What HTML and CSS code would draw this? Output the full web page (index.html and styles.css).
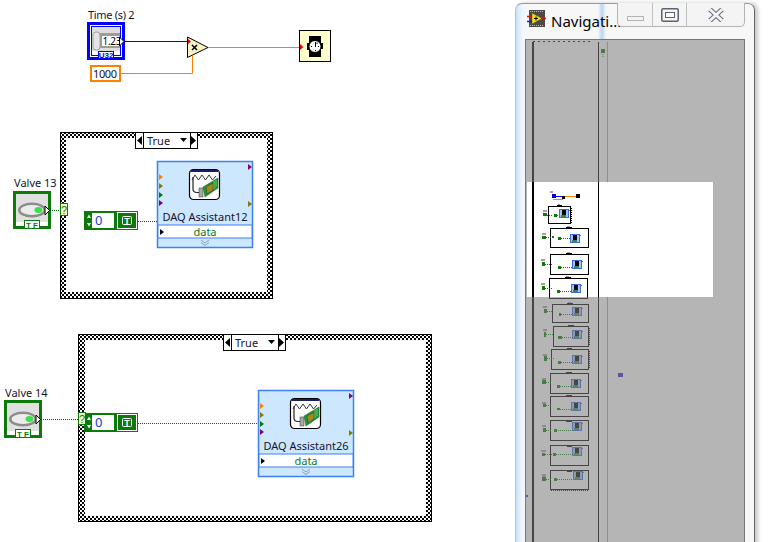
FILE: index.html
```html
<!DOCTYPE html>
<html lang="en">
<head>
<meta charset="utf-8">
<title>LabVIEW block diagram</title>
<link rel="stylesheet" href="styles.css">
</head>
<body>
<main class="desktop">
  <svg class="diagram" width="510" height="542" viewBox="0 0 510 542" xmlns="http://www.w3.org/2000/svg">
    <defs>
      <pattern id="checker" width="4" height="4" patternUnits="userSpaceOnUse">
        <rect width="4" height="4" fill="#fff"/>
        <rect width="2" height="2" fill="#000"/>
        <rect x="2" y="2" width="2" height="2" fill="#000"/>
      </pattern>

      <g id="selector">
        <rect class="sel-box" x="0.5" y="0.5" width="62" height="16"/>
        <path class="ink-line" d="M8.5 0V17M55.5 0V17"/>
        <path class="ink" d="M2 8.5L7 4V13Z"/>
        <path class="ink" d="M61 8.5L56 4V13Z"/>
        <path class="ink" d="M45 6H52L48.500 10Z"/>
      </g>

      <g id="daq">
        <rect class="daq-box" x="0.5" y="0.5" width="95" height="86"/>
        <rect class="daq-row" x="1" y="64" width="94" height="13"/>
        <path class="term-orange" d="M2 13V19L6 16Z"/>
        <path class="term-olive" d="M2 22V28L6 25Z"/>
        <path class="term-green" d="M2 31V37L6 34Z"/>
        <path class="term-purple" d="M2 39V45L6 42Z"/>
        <path class="term-purple" d="M91 3V9L95 6Z"/>
        <path class="term-olive" d="M91 40V46L95 43Z"/>
        <path class="ink" d="M3 68V74L7 71Z"/>
        <path class="chevron" d="M44 79L48 82L52 79M44 81.500L48 84.500L52 81.500"/>
        <g transform="translate(32 8)">
          <rect class="icon-card" x="0.500" y="0.500" width="30" height="30" rx="4"/>
          <rect class="icon-band" x="2" y="1" width="27" height="2"/>
          <path class="icon-wave" d="M3 11L6 6L9.500 11L13 6L16.500 11L20 6L23.500 11L27 7"/>
          <path class="icon-cable" d="M4 8V20Q4 23.500 8 23.500H11"/>
          <path class="board" d="M14 18L29 9V19L16 28Z"/>
          <path class="board-chip" d="M17 18L24 14V21L18 25Z"/>
          <rect class="plug" x="10" y="19" width="4" height="9"/>
          <path class="icon-trace" d="M25 12V20M27 11V18"/>
        </g>
      </g>

      <g id="led-control">
        <rect class="led-frame" x="1.500" y="1.500" width="35" height="35"/>
        <rect class="led-panel" x="3" y="3" width="32" height="28"/>
        <ellipse class="led-ring" cx="19" cy="19" rx="14" ry="7.500"/>
        <ellipse class="led-core" cx="19" cy="19" rx="11.500" ry="5"/>
        <ellipse class="led-spot" cx="25.500" cy="19" rx="4" ry="3"/>
        <path class="out-arrow" d="M32 15V24L36.500 19.500Z"/>
        <rect class="tf-tag" x="11.500" y="29.500" width="15" height="8"/>
        <text class="tf-text" x="19" y="36.500">T F</text>
      </g>

      <g id="bool-const">
        <rect class="num-box" x="1" y="1" width="30" height="17"/>
        <rect class="spin" x="2" y="2" width="6" height="15"/>
        <path class="spin-arrow" d="M5 3.500L7 7H3ZM5 15.500L7 12H3Z"/>
        <text class="num-text" x="11" y="14">0</text>
        <rect class="t-outer" x="32.500" y="0.500" width="21" height="18"/>
        <rect class="t-inner" x="34" y="2" width="18" height="15"/>
        <rect class="t-chip" x="38.500" y="5.500" width="9" height="8" rx="1"/>
        <text class="t-text" x="43" y="13">T</text>
      </g>
    </defs>

    <!-- top row -->
    <path class="wire-blue" d="M124 41.500H188"/>
    <path class="wire-orange" d="M120 73.500H192.500V56M208 47.500H300"/>
    <text class="label label-tight" x="88" y="19">Time (s) 2</text>
    <rect class="u32-outer" x="88.500" y="23.500" width="35" height="35"/>
    <rect class="u32-inner" x="91.500" y="26.500" width="29" height="29"/>
    <rect class="u32-panel" x="92" y="27" width="28" height="24"/>
    <rect class="u32-slide" x="99" y="33" width="21" height="15"/>
    <rect class="u32-knob" x="93" y="32" width="7" height="18" rx="3"/>
    <rect class="u32-field" x="102" y="36" width="17" height="10"/>
    <text class="u32-value" x="102.500" y="45">1.23</text>
    <path class="out-arrow" d="M119.500 37V46L124 41.500Z"/>
    <rect class="u32-tag" x="98.500" y="51.500" width="15" height="7"/>
    <text class="u32-text" x="106" y="58">U32</text>
    <rect class="const-box" x="91" y="66" width="29" height="15"/>
    <text class="const-text" x="93" y="78">1000</text>
    <path class="mult" d="M187.500 37V57.500L208 47.500Z"/>
    <path class="term-red" d="M188 39V44L191 41.500Z"/>
    <path class="mult-x" d="M192 45L197 50M197 45L192 50"/>
    <rect class="timer" x="299.500" y="30.500" width="31" height="31"/>
    <path class="term-red" d="M300 44V50L303.500 47Z"/>
    <rect class="ink" x="309" y="36" width="12" height="21"/>
    <circle class="dial" cx="315" cy="46.500" r="6"/>
    <rect class="ink" x="307" y="43" width="2" height="7"/>
    <rect class="ink" x="321" y="43" width="2" height="6"/>
    <path class="ink-line" d="M315.500 42V47M311 46.500H312M318 46.500H319M315.500 50V51M317 42.500V44"/>

    <!-- first case -->
    <rect class="case-frame" x="60.500" y="132.500" width="212" height="166"/>
    <rect class="case-inner" x="66" y="138" width="201" height="154"/>
    <use href="#selector" x="135" y="132"/>
    <text class="label" x="147" y="145">True</text>
    <text class="label" x="14" y="187">Valve 13</text>
    <use href="#led-control" x="13" y="191"/>
    <path class="wire-dots" d="M50 210.500H60M138 221.500H157"/>
    <rect class="tunnel" x="60.500" y="203.500" width="7" height="12"/>
    <text class="tunnel-text" x="64" y="214">?</text>
    <use href="#bool-const" x="84" y="211"/>
    <use href="#daq" x="157" y="161"/>
    <text class="daq-title" x="205" y="221">DAQ Assistant12</text>
    <text class="daq-data" x="205" y="236">data</text>

    <!-- second case -->
    <rect class="case-frame" x="78.500" y="334.500" width="353" height="187"/>
    <rect class="case-inner" x="85" y="340" width="341" height="176"/>
    <use href="#selector" x="223" y="334"/>
    <text class="label" x="235" y="347">True</text>
    <text class="label" x="5" y="397">Valve 14</text>
    <use href="#led-control" x="4" y="400"/>
    <path class="wire-dots" d="M41 419.500H78M138 423.500H258"/>
    <use href="#bool-const" x="84" y="413"/>
    <rect class="tunnel" x="78.500" y="412.500" width="7" height="12"/>
    <text class="tunnel-text" x="82" y="423">?</text>
    <use href="#daq" x="258" y="390"/>
    <text class="daq-title" x="306" y="450">DAQ Assistant26</text>
    <text class="daq-data" x="306" y="465">data</text>
  </svg>

  <section class="nav-window">
    <div class="glass-streak"></div>
    <header class="nav-title">
      <svg class="nav-icon" width="19" height="18" viewBox="0 0 19 18" xmlns="http://www.w3.org/2000/svg">
        <rect class="film" x="2" y="0" width="16" height="17"/>
        <path class="film-holes" d="M3 1.500H17M3 15.500H17"/>
        <path class="lv-tri" d="M5 3V14L15 8.500Z"/>
        <path class="lv-red" d="M14 8.500H19M0 6.500H5"/>
        <path class="lv-blue" d="M0 11.500H5"/>
        <path class="ink-line" d="M7 8.500H11M9 6.500V10.500"/>
      </svg>
      <span class="nav-name">Navigati...</span>
    </header>
    <div class="caption-buttons">
      <div class="cap cap-min">
        <svg width="17" height="5" viewBox="0 0 17 5" xmlns="http://www.w3.org/2000/svg"><rect class="min-glyph" x="0.500" y="0.500" width="16" height="4"/></svg>
      </div>
      <div class="cap cap-max">
        <svg width="18" height="14" viewBox="0 0 18 14" xmlns="http://www.w3.org/2000/svg"><rect class="max-glyph" x="0.750" y="0.750" width="16.500" height="12.500" rx="1.500"/><rect class="max-hole" x="4.500" y="4.500" width="9" height="5"/></svg>
      </div>
      <div class="cap cap-close">
        <svg width="16" height="14" viewBox="0 0 16 14" xmlns="http://www.w3.org/2000/svg"><path class="close-outer" d="M2 1.500L14 12.500M14 1.500L2 12.500"/><path class="close-inner" d="M2 1.500L14 12.500M14 1.500L2 12.500"/></svg>
      </div>
    </div>
    <svg class="nav-map" width="220" height="503" viewBox="525 39 220 503" xmlns="http://www.w3.org/2000/svg">
      <defs>
        <g id="mini-daq">
          <rect class="mini-blue" x="0" y="0" width="10" height="9"/>
          <rect class="mini-light" x="1" y="1" width="8" height="7"/>
          <rect class="mini-dark" x="3" y="1" width="4" height="5"/>
          <rect class="mini-green" x="2" y="6" width="5" height="2"/>
          <rect class="mini-purple" x="10" y="1" width="1" height="1"/>
        </g>
      </defs>
      <rect class="map-bg" x="525" y="39" width="220" height="503"/>
      <path class="map-rule" d="M533 42V542"/>
      <path class="map-rule-fine" d="M598.500 42V542"/>
      <path class="map-dash" d="M533 41.500H590"/>
      <rect class="mini-green-node" x="601" y="49" width="4" height="4"/>
      <path class="mini-wire" d="M603 54V58"/>

      <!-- miniature of the top row -->
      <rect class="mini-speck" x="550" y="191" width="3" height="2"/>
      <rect class="mini-u32" x="552" y="194" width="4" height="4"/>
      <path class="mini-blue-wire" d="M556 196.500H564"/>
      <path class="mini-orange-wire" d="M564 196.500H576M553 199.500H563"/>
      <rect class="mini-dark" x="562" y="196" width="3" height="3"/>
      <rect class="mini-dark" x="576" y="194" width="4" height="4"/>

      <!-- miniature cases -->
      <g>
        <rect class="mini-case" x="548.500" y="206.500" width="22" height="17"/>
        <path class="mini-dash" d="M571.500 208V223"/>
        <rect class="mini-dark" x="557" y="205" width="5" height="2"/><rect class="mini-speck" x="558" y="204" width="2" height="1"/>
        <use href="#mini-daq" x="559" y="209"/>
        <rect class="mini-speck" x="543" y="210" width="4" height="2"/><rect class="mini-green-node" x="543" y="213" width="4" height="3"/>
        <path class="mini-wire" d="M547 215.500H552M557 215.500H559"/><rect class="mini-green-node" x="554" y="214" width="3" height="3"/>
      </g>
      <g>
        <rect class="mini-case" x="550.500" y="228.500" width="38" height="19"/>
        <rect class="mini-dark" x="566" y="227" width="6" height="2"/><rect class="mini-speck" x="567" y="226" width="3" height="1"/>
        <use href="#mini-daq" x="570" y="234"/>
        <rect class="mini-speck" x="542" y="233" width="4" height="2"/><rect class="mini-green-node" x="542" y="236" width="4" height="3"/>
        <path class="mini-wire" d="M546 237.500H552M561 238.500H570"/><rect class="mini-green-node" x="552" y="236" width="2" height="2"/><rect class="mini-green-node" x="558" y="237" width="3" height="3"/>
      </g>
      <g>
        <rect class="mini-case" x="550.500" y="254.500" width="38" height="20"/>
        <rect class="mini-dark" x="566" y="253" width="6" height="2"/><rect class="mini-speck" x="567" y="252" width="3" height="1"/>
        <use href="#mini-daq" x="572" y="260"/>
        <rect class="mini-speck" x="541" y="259" width="4" height="2"/><rect class="mini-green-node" x="542" y="262" width="3" height="4"/>
        <path class="mini-wire" d="M545 264.500H552M561 267.500H572"/><rect class="mini-green-node" x="558" y="266" width="3" height="3"/>
      </g>
      <g>
        <rect class="mini-case" x="549.500" y="278.500" width="38" height="20"/>
        <rect class="mini-dark" x="565" y="277" width="6" height="2"/><rect class="mini-speck" x="566" y="276" width="3" height="1"/>
        <use href="#mini-daq" x="571" y="284"/>
        <rect class="mini-speck" x="541" y="283" width="4" height="2"/><rect class="mini-green-node" x="542" y="286" width="3" height="4"/>
        <path class="mini-wire" d="M545 288.500H552M560 291.500H571"/><rect class="mini-green-node" x="557" y="290" width="3" height="3"/>
      </g>
      <g>
        <rect class="mini-case" x="552.500" y="304.500" width="36" height="18"/>
        <rect class="mini-dark" x="567" y="303" width="6" height="2"/><rect class="mini-speck" x="568" y="302" width="3" height="1"/>
        <use href="#mini-daq" x="572" y="307"/>
        <rect class="mini-speck" x="543" y="306" width="4" height="2"/><rect class="mini-green-node" x="544" y="309" width="3" height="4"/>
        <path class="mini-wire" d="M547 311.500H553M561 314.500H572"/><rect class="mini-green-node" x="559" y="313" width="2" height="3"/>
      </g>
      <g>
        <rect class="mini-case" x="553.500" y="326.500" width="35" height="20"/>
        <path class="mini-dash" d="M589.500 328V345"/>
        <rect class="mini-dark" x="568" y="325" width="6" height="2"/>
        <use href="#mini-daq" x="572" y="330"/>
        <rect class="mini-speck" x="543" y="329" width="4" height="2"/><rect class="mini-green-node" x="544" y="332" width="2" height="5"/>
        <path class="mini-wire" d="M546 334.500H553M562 337.500H572"/><rect class="mini-green-node" x="558" y="336" width="4" height="3"/>
      </g>
      <g>
        <rect class="mini-case" x="551.500" y="349.500" width="37" height="20"/>
        <path class="mini-dash" d="M589.500 351V368"/>
        <rect class="mini-dark" x="567" y="348" width="5" height="2"/>
        <use href="#mini-daq" x="572" y="355"/>
        <rect class="mini-speck" x="543" y="354" width="4" height="2"/><rect class="mini-green-node" x="544" y="356" width="3" height="5"/>
        <path class="mini-wire" d="M547 358.500H554M561 362.500H572"/><rect class="mini-green-node" x="558" y="361" width="3" height="3"/>
      </g>
      <g>
        <rect class="mini-case" x="550.500" y="373.500" width="38" height="20"/>
        <rect class="mini-dark" x="566" y="372" width="6" height="2"/>
        <use href="#mini-daq" x="571" y="379"/>
        <rect class="mini-speck" x="542" y="378" width="4" height="2"/><rect class="mini-green-node" x="542" y="380" width="4" height="4"/>
        <path class="mini-wire" d="M546 382.500H552M560 386.500H571"/><rect class="mini-green-node" x="557" y="385" width="3" height="3"/>
      </g>
      <g>
        <rect class="mini-case" x="550.500" y="396.500" width="38" height="20"/>
        <rect class="mini-dark" x="566" y="395" width="6" height="2"/>
        <use href="#mini-daq" x="571" y="402"/>
        <rect class="mini-speck" x="542" y="402" width="4" height="2"/><rect class="mini-green-node" x="543" y="404" width="3" height="3"/>
        <path class="mini-wire" d="M546 405.500H552M560 409.500H571"/><rect class="mini-green-node" x="557" y="408" width="3" height="2"/>
      </g>
      <g>
        <rect class="mini-case" x="550.500" y="420.500" width="38" height="20"/>
        <rect class="mini-dark" x="566" y="420" width="6" height="2"/>
        <use href="#mini-daq" x="572" y="422"/>
        <rect class="mini-speck" x="542" y="425" width="4" height="2"/><rect class="mini-green-node" x="543" y="428" width="3" height="4"/>
        <path class="mini-wire" d="M546 430.500H552M556 430.500H572"/><rect class="mini-green-node" x="554" y="429" width="3" height="3"/>
      </g>
      <g>
        <rect class="mini-case" x="550.500" y="445.500" width="38" height="20"/>
        <rect class="mini-dark" x="567" y="445" width="5" height="2"/>
        <use href="#mini-daq" x="572" y="447"/>
        <rect class="mini-speck" x="541" y="450" width="5" height="2"/><rect class="mini-green-node" x="542" y="453" width="3" height="3"/>
        <path class="mini-wire" d="M545 454.500H552M556 454.500H572"/><rect class="mini-green-node" x="553" y="453" width="3" height="3"/>
      </g>
      <g>
        <rect class="mini-case" x="550.500" y="470.500" width="38" height="19"/>
        <path class="mini-dash" d="M551 490.500H588"/>
        <rect class="mini-dark" x="567" y="470" width="5" height="2"/>
        <use href="#mini-daq" x="573" y="471"/>
        <rect class="mini-speck" x="542" y="474" width="4" height="3"/><rect class="mini-green-node" x="542" y="477" width="4" height="4"/>
        <path class="mini-wire" d="M546 479.500H552M557 479.500H573"/><rect class="mini-green-node" x="554" y="478" width="3" height="3"/>
      </g>
      <rect class="mini-indigo" x="618" y="373" width="5" height="4"/>
      <rect class="mini-indigo" x="526" y="495" width="2" height="2"/>

      <!-- dimmed area outside the visible region -->
      <path class="map-shade" d="M525 39H745V542H525ZM527 182V297H713V182Z"/>
      <path class="map-rule-thin" d="M607.500 42V182M607.500 297V542"/>
      <rect class="map-edge" x="525.500" y="39.500" width="219" height="503"/>
    </svg>
  </section>
</main>
</body>
</html>
```

FILE: styles.css
```css
html, body {
  margin: 0;
  padding: 0;
  background: #fff;
}

.desktop {
  position: relative;
  width: 773px;
  height: 542px;
  overflow: hidden;
  background: #fff;
}

.diagram {
  position: absolute;
  left: 0;
  top: 0;
  display: block;
}

/* diagram text */
.label, .daq-title, .daq-data, .const-text, .num-text, .u32-value {
  font-family: "Noto Sans", "Liberation Sans", sans-serif;
  font-size: 11px;
}
.label { fill: #14142e; }
.label-tight { letter-spacing: -0.3px; }
.daq-title { fill: #14142e; text-anchor: middle; }
.daq-data { fill: #0a7a1e; text-anchor: middle; }
.const-text { fill: #101030; letter-spacing: -0.4px; }
.num-text { fill: #1a3ad8; font-size: 13px; }
.u32-value { fill: #000; font-size: 10px; letter-spacing: -0.3px; }
.u32-text, .tf-text {
  font-family: "Liberation Sans", sans-serif;
  font-size: 8px;
  font-weight: 700;
  text-anchor: middle;
}
.u32-text { fill: #0000ff; }
.tf-text { fill: #0b7a0b; }
.tunnel-text {
  font-family: "Liberation Sans", sans-serif;
  font-size: 11px;
  fill: #0b7a0b;
  text-anchor: middle;
}
.t-text {
  font-family: "Liberation Sans", sans-serif;
  font-size: 9px;
  font-weight: 700;
  fill: #fff;
  text-anchor: middle;
}

/* wires */
.wire-blue, .wire-orange, .wire-dots {
  fill: none;
  stroke-width: 1;
}
.wire-blue { stroke: #0000ff; }
.wire-orange { stroke: #ff8000; }
.wire-dots { stroke: #006a00; stroke-dasharray: 1 1; }

/* shared ink */
.ink { fill: #000; }
.ink-line { fill: none; stroke: #000; stroke-width: 1; }
.out-arrow { fill: #fff; stroke: #000; stroke-width: 1; }

/* U32 control */
.u32-outer { fill: #fff; stroke: #0000ff; stroke-width: 3; }
.u32-inner { fill: #fff; stroke: #0000ff; stroke-width: 1; }
.u32-panel { fill: #dedede; }
.u32-slide { fill: #9c9c9c; }
.u32-knob { fill: #e4e4e4; stroke: #a0a0a0; stroke-width: 1; }
.u32-field { fill: #fff; }
.u32-tag { fill: #fff; stroke: #0000ff; stroke-width: 1; }
.const-box { fill: #fff; stroke: #ff8000; stroke-width: 2; }

/* multiply and timer */
.mult { fill: #f8f2c4; stroke: #000; stroke-width: 1; }
.mult-x { fill: none; stroke: #000; stroke-width: 1.500; }
.term-red { fill: #f00000; }
.timer { fill: #ffffcc; stroke: #000; stroke-width: 1; }
.dial { fill: #fff; stroke: #000; stroke-width: 1; }

/* case structures */
.case-frame { fill: url(#checker); stroke: #000; stroke-width: 1; }
.case-inner { fill: #fff; }
.sel-box { fill: #fff; stroke: #000; stroke-width: 1; }

/* DAQ assistant */
.daq-box { fill: #cde7ff; stroke: #3f7ff2; stroke-width: 1.500; }
.daq-row { fill: #fff; stroke: #3f7ff2; stroke-width: 1; }
.term-orange { fill: #ff8000; }
.term-olive { fill: #7d7d00; }
.term-green { fill: #007a00; }
.term-purple { fill: #800080; }
.chevron { fill: none; stroke: #8aa0b8; stroke-width: 1; }
.icon-card { fill: #fff; stroke: #000; stroke-width: 1.200; }
.icon-band { fill: #1c1c60; }
.icon-wave { fill: none; stroke: #333; stroke-width: 1; }
.icon-cable { fill: none; stroke: #222; stroke-width: 1.200; }
.board { fill: #1c9a3c; stroke: #0d5a22; stroke-width: 0.500; }
.board-chip { fill: #a08a20; stroke: #3a3000; stroke-width: 0.500; }
.plug { fill: #a8a8a8; stroke: #333; stroke-width: 0.500; }
.icon-trace { fill: none; stroke: #d0e860; stroke-width: 0.500; }

/* boolean controls and constants */
.led-frame { fill: #fff; stroke: #0b7a0b; stroke-width: 3; }
.led-panel { fill: #e0e0e0; }
.led-ring { fill: #8c8c8c; }
.led-core { fill: #ececec; }
.led-spot { fill: #3ce04a; }
.tf-tag { fill: #fff; stroke: #0b7a0b; stroke-width: 1; }
.tunnel { fill: #f6f6c0; stroke: #0b7a0b; stroke-width: 1; }
.num-box { fill: #fff; stroke: #0b7a0b; stroke-width: 2; }
.spin { fill: #0b7a0b; }
.spin-arrow { fill: #fff; }
.t-outer { fill: #fff; stroke: #0b7a0b; stroke-width: 1; }
.t-inner { fill: #0b7a0b; }
.t-chip { fill: #0b7a0b; stroke: #fff; stroke-width: 1; }

/* navigation window */
.nav-window {
  position: absolute;
  left: 515px;
  top: 3px;
  width: 240px;
  height: 560px;
  padding: 0 9px;
  box-sizing: border-box;
  display: flex;
  flex-direction: column;
  background: linear-gradient(90deg, #c9e0f7 0, #eef6ff 6px, #f7f7f7 10px);
  border-radius: 7px 7px 0 0;
  border-right: 1px solid #666;
  border-left: 1px solid #b8c4d0;
  border-top: 1px solid #9a9a9a;
  box-shadow: 3px 0 4px rgba(0, 0, 0, 0.22);
}

.glass-streak {
  position: absolute;
  left: 82px;
  top: 0;
  width: 8px;
  height: 35px;
  background: linear-gradient(90deg, rgba(170, 205, 240, 0), rgba(170, 205, 240, 0.8), rgba(170, 205, 240, 0));
}

.nav-title {
  position: relative;
  height: 35px;
  flex: none;
  display: flex;
  align-items: center;
  gap: 5px;
  padding: 0 0 5px 2px;
  box-sizing: border-box;
}

.nav-icon { display: block; flex: none; }
.nav-name {
  font-family: "Noto Sans", "Open Sans", sans-serif;
  font-size: 15px;
  line-height: 20px;
  margin-top: 3px;
  color: #000;
  white-space: nowrap;
}

.film { fill: #4a4a4a; }
.film-holes { fill: none; stroke: #bdbdbd; stroke-width: 1; stroke-dasharray: 1 1; }
.lv-tri { fill: #f2e21c; stroke: #6a5a00; stroke-width: 0.500; }
.lv-red { fill: none; stroke: #e01010; stroke-width: 1.500; }
.lv-blue { fill: none; stroke: #1020e0; stroke-width: 1.500; }

.caption-buttons {
  position: absolute;
  right: 9px;
  top: -1px;
  width: 128px;
  height: 24px;
  box-sizing: border-box;
  display: flex;
  background: #f4f4f4;
  border: 1px solid #b4b4b4;
  border-top: 0;
  border-radius: 0 0 5px 5px;
}

.cap {
  display: flex;
  align-items: center;
  justify-content: center;
  box-sizing: border-box;
}
.cap-min { width: 35px; border-right: 1px solid #c0c0c0; padding-top: 7px; }
.cap-max { width: 34px; border-right: 1px solid #c0c0c0; }
.cap-close { flex: 1; }

.min-glyph { fill: #f4f4f4; stroke: #b4b4b4; stroke-width: 1; }
.max-glyph { fill: #f4f4f4; stroke: #5c6270; stroke-width: 1.500; }
.max-hole { fill: #fff; stroke: #5c6270; stroke-width: 1; }
.close-outer { fill: none; stroke: #6a7080; stroke-width: 5; }
.close-inner { fill: none; stroke: #f4f4f4; stroke-width: 3; }

.nav-map { display: block; flex: none; }
.map-bg { fill: #fff; }
.map-rule { fill: none; stroke: #000; stroke-width: 2; }
.map-rule-fine { fill: none; stroke: #000; stroke-width: 1; }
.map-rule-thin { fill: none; stroke: #8e8e8e; stroke-width: 1; }
.map-dash { fill: none; stroke: #000; stroke-width: 1; stroke-dasharray: 2 3; }
.map-shade { fill: rgba(124, 124, 124, 0.565); fill-rule: evenodd; }
.map-edge { fill: none; stroke: #777; stroke-width: 1; }

.mini-case { fill: none; stroke: #000; stroke-width: 1; }
.mini-dash { fill: none; stroke: #000; stroke-width: 1; stroke-dasharray: 1 1; }
.mini-wire { fill: none; stroke: #0b7a0b; stroke-width: 1; stroke-dasharray: 1 1; }
.mini-blue { fill: #3a6ae8; }
.mini-light { fill: #9cc8ff; }
.mini-dark { fill: #000; }
.mini-green { fill: #3a8a3a; }
.mini-purple { fill: #a040a0; }
.mini-green-node { fill: #0b7a0b; }
.mini-speck { fill: #b49a9a; }
.mini-u32 { fill: #0000d0; }
.mini-blue-wire { fill: none; stroke: #0000ff; stroke-width: 1; }
.mini-orange-wire { fill: none; stroke: #ff8000; stroke-width: 1; }
.mini-indigo { fill: #2a2ac0; }
```
